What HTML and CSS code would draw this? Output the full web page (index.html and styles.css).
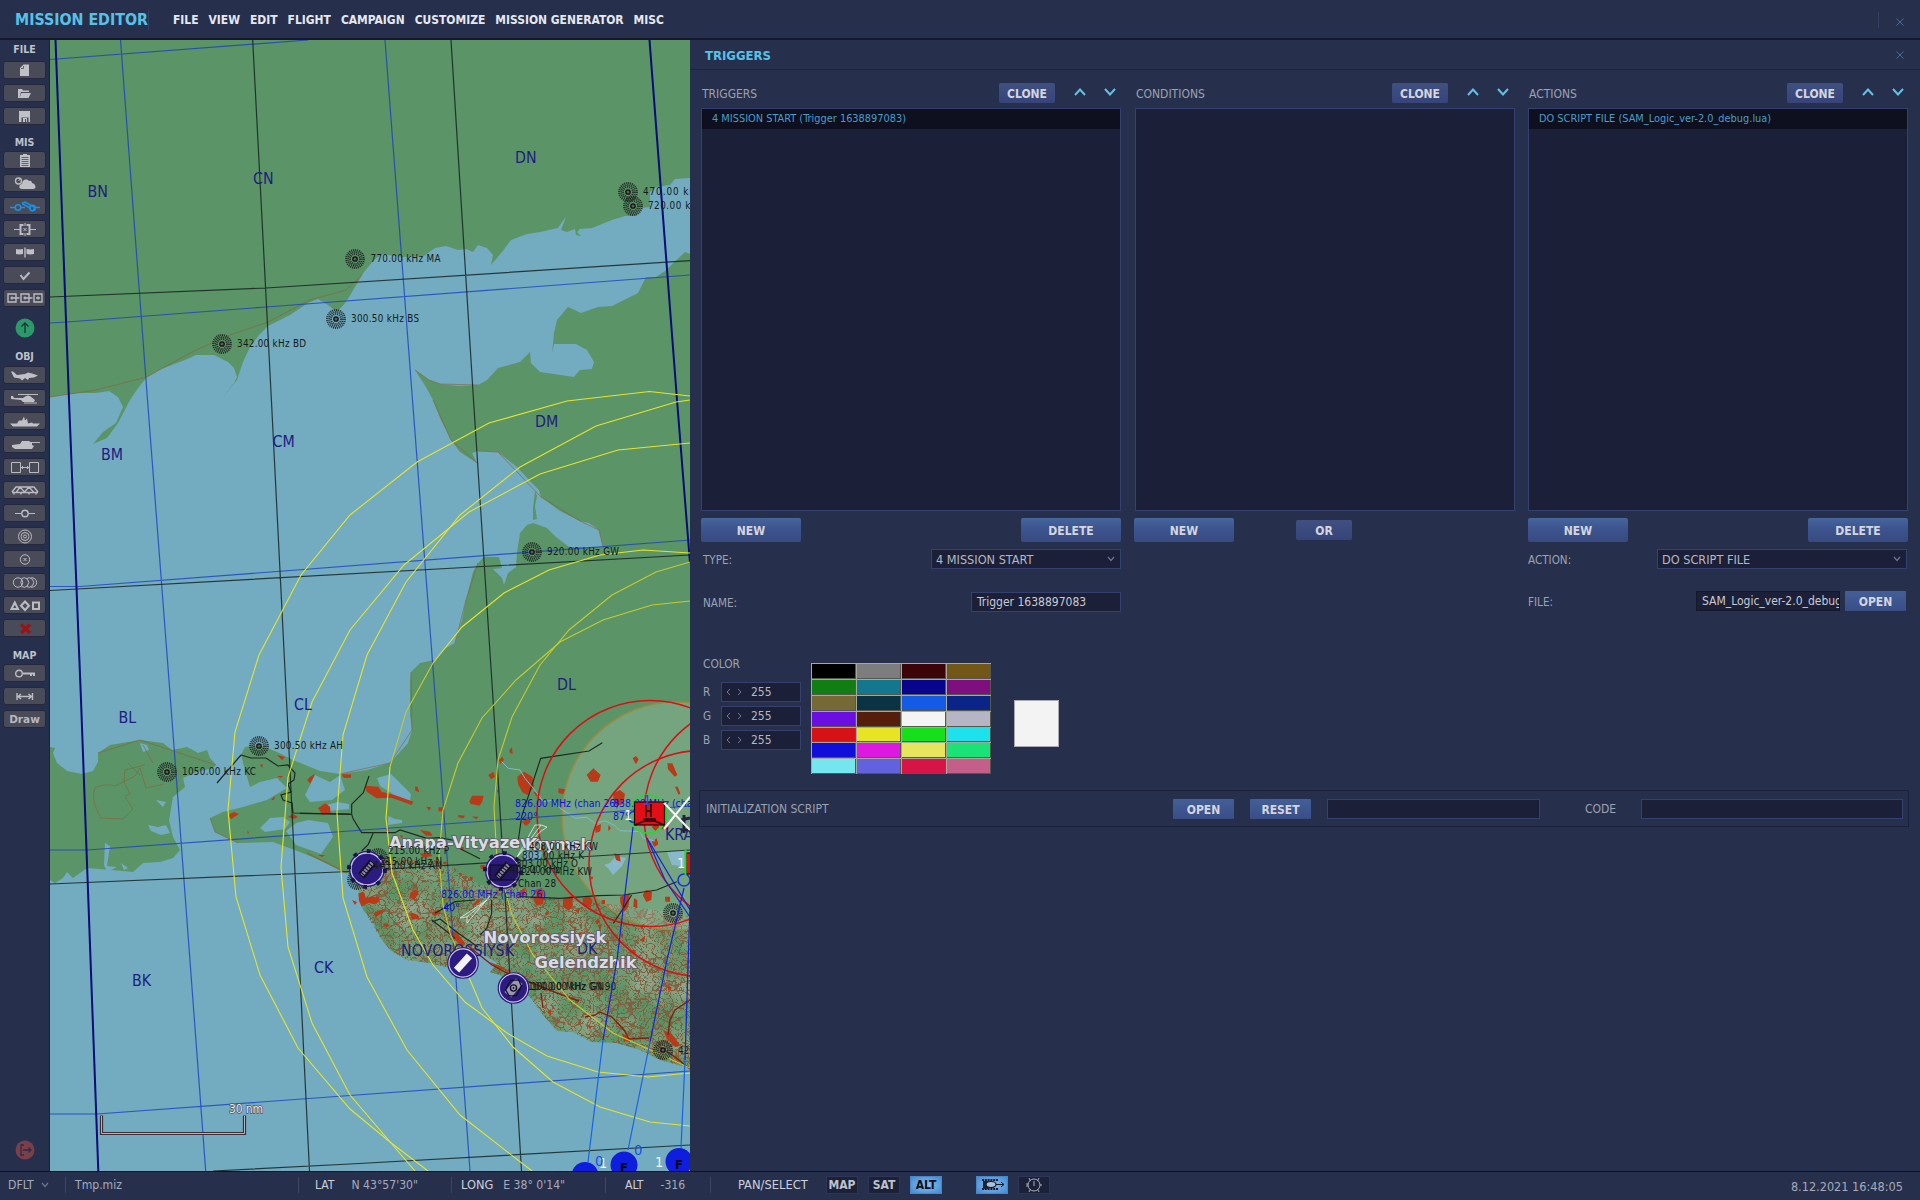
FILE: index.html
```html
<!DOCTYPE html>
<html lang="en">
<head>
<meta charset="utf-8">
<title>Mission Editor</title>
<link rel="stylesheet" href="styles.css">
</head>
<body>
<header class="topbar">
  <h1 class="app-title">MISSION EDITOR</h1>
  <nav class="menu"><span>FILE</span><span>VIEW</span><span>EDIT</span><span>FLIGHT</span><span>CAMPAIGN</span><span>CUSTOMIZE</span><span>MISSION GENERATOR</span><span>MISC</span></nav>
  <svg class="close close-app" viewBox="0 0 8 8"><path d="M0.5 0.5 7.5 7.5M7.5 0.5 0.5 7.5"/></svg>
</header>
<main class="workspace">
  <aside class="sidebar">
    <div class="group-label first">FILE</div>
    <div class="tools">
      <button class="tool"><svg viewBox="0 0 42 17"><path class="f" d="M19.500 2.500H25V14H16V6L19.500 2.500Z"/><path class="d" d="M17 6.500h2.500V4"/></svg></button>
      <button class="tool"><svg viewBox="0 0 42 17"><path class="f" d="M14 13V4h4l1 1.500h6V7h-8l-1.500 5.500L17.500 8H27l-2.500 5Z"/></svg></button>
      <button class="tool"><svg viewBox="0 0 42 17"><path class="f" fill-rule="evenodd" d="M15 3h11v11h-1.500V9.500h-7V14H15ZM19 10h4v4h-1v-3h-1v3h-2Z"/></svg></button>
    </div>
    <div class="group-label">MIS</div>
    <div class="tools">
      <button class="tool"><svg viewBox="0 0 42 17"><path class="f" d="M16 3h3V2h4v1h3v12H16Z"/><path class="d" d="M17.500 5.500h7M17.500 7.500h7M17.500 9.500h7M17.500 11.500h7M17.500 13.500h7"/></svg></button>
      <button class="tool"><svg viewBox="0 0 42 17"><circle class="s b" cx="14.500" cy="6" r="3"/><path class="s" d="M14.500 6l2-2.500"/><path class="f" d="M18 14c-4 0-3-5 0-5 0-4 4-6 7-3 2-1 3 1 3 2 4 1 5 6 1 6Z"/></svg></button>
      <button class="tool active"><svg viewBox="0 0 42 17"><path d="M6 9.500h5M17 9.500h4M31 9.500h5M18 5.500l3-1.500 10 5.500-1.500 2.500"/><path d="M18 5.500l9 5"/><circle cx="14" cy="9.500" r="2.800"/><circle cx="28.500" cy="10" r="2.800"/></svg></button>
      <button class="tool"><svg viewBox="0 0 42 17"><path class="s" d="M10 8.500h6M26 8.500h6M21 2v3M21 12v3M19.500 7l3 3M22.500 7l-3 3"/><path class="s bb" d="M19.500 4h-3v9h3M22.500 4h3v9h-3"/></svg></button>
      <button class="tool"><svg viewBox="0 0 42 17"><path class="f" d="M12 5l3 .5 4-.5v5l-4 .5-3-.5ZM22.500 5l4 .5 3.500-.5v5l-3.500.5-4-.5Z"/><path class="s b" d="M21 3.500v10"/></svg></button>
      <button class="tool"><svg viewBox="0 0 42 17"><path class="s bb" d="M16.500 8l3 4 6-6.500"/></svg></button>
      <button class="tool"><svg viewBox="0 0 42 17"><path class="s b" d="M4 4h8v8H4ZM17 4h8v8h-8ZM30 4h8v8h-8ZM6.500 8h9M19.500 8h9M32 8h4M8 6.500v3M21 6.500v3M34 6.500v3"/></svg></button>
    </div>
    <svg class="upload" viewBox="0 0 20 20"><circle cx="10" cy="10" r="9.500"/><path d="M10 15V5M6.500 8.500 10 5l3.500 3.500"/></svg>
    <div class="group-label obj">OBJ</div>
    <div class="tools">
      <button class="tool"><svg viewBox="0 0 42 17"><path class="f" d="M7 4.500l2 0 4 3.500 8-1 3-1.500 4 1 6 2-4 2-5 .5-1 2-3-2-3 2.500-2-2-6-1Z"/></svg></button>
      <button class="tool"><svg viewBox="0 0 42 17"><path class="f" d="M7 6l2 0 1 2 9 0 3-2h4l5 4-1 2-11 0-2-2-10-1Z"/><path class="s" d="M14 4.500h20M24 4v3M20 13h13"/></svg></button>
      <button class="tool"><svg viewBox="0 0 42 17"><path class="f" d="M6 10.500h7l2-3 3 0 2-4 1 4 2-2 1 5 4-1 1 1h7l-3 3H9Z"/></svg></button>
      <button class="tool"><svg viewBox="0 0 42 17"><path class="f" d="M8 9l8-1 2-3h7l3 2v2l2 1-2 3H11l-3-2Z"/><path class="s" d="M26 6.500h10"/></svg></button>
      <button class="tool"><svg viewBox="0 0 42 17"><path class="s" d="M7.500 3.500h9v10h-9ZM25.500 3.500h9v10h-9ZM16.500 8.500h9M18.500 7v3M23.500 7v3"/></svg></button>
      <button class="tool"><svg viewBox="0 0 42 17"><path class="s b" d="M8 10.500h26M8 10l4-5h18l4 5M12.500 10l3.500-5 4.500 5 4.500-5 4.500 5M10 11v1.500M17 11v1.500M25 11v1.500M32 11v1.500"/></svg></button>
      <button class="tool"><svg viewBox="0 0 42 17"><path class="s" d="M11 8.500h6.500M24.500 8.500H31"/><circle class="s b" cx="21" cy="8.500" r="3.200"/></svg></button>
      <button class="tool"><svg viewBox="0 0 42 17"><circle class="s" cx="21" cy="8.500" r="6.500"/><circle class="s" cx="21" cy="8.500" r="4"/><circle class="s" cx="21" cy="8.500" r="1.500"/></svg></button>
      <button class="tool"><svg viewBox="0 0 42 17"><circle class="s" cx="21" cy="8.500" r="4.700"/><path class="s" d="M19.500 7l3 3M22.500 7l-3 3"/></svg></button>
      <button class="tool"><svg viewBox="0 0 42 17"><circle class="s" cx="14" cy="8.500" r="4.700"/><path class="s" d="M17.500 4.500a4.700 4.700 0 1 1 0 8M22.500 4.500a4.700 4.700 0 1 1 0 8M18 5.500a4.700 4.700 0 0 0 0 6"/><path class="s" d="M27 3.900a4.700 4.700 0 1 1 0 9.200"/></svg></button>
      <button class="tool"><svg viewBox="0 0 42 17"><path class="s bb" d="M7.500 12l3.300-6.500L14 12ZM21 4.500 25 8.800 21 13 17 8.800ZM29 5.500h6v6.500h-6Z"/></svg></button>
      <button class="tool"><svg viewBox="0 0 42 17"><path class="x" d="M17 4.500l9 8.500M26 4.500l-9 8.500"/></svg></button>
    </div>
    <div class="group-label">MAP</div>
    <div class="tools">
      <button class="tool"><svg viewBox="0 0 42 17"><circle class="s b" cx="15" cy="8.500" r="3.300"/><path class="s bb" d="M18.500 8.500H31M27 9v2M30 9v2"/></svg></button>
      <button class="tool"><svg viewBox="0 0 42 17"><path class="s b" d="M13 5v7M28.500 5v7M14 8.500h13.500M17 6l-3 2.500 3 2.500M24.500 6l3 2.500-3 2.500"/></svg></button>
      <button class="tool draw">Draw</button>
    </div>
    <svg class="exit" viewBox="0 0 20 20"><circle cx="10" cy="10" r="9.500"/><path d="M9 5H6v10h3M8 10h8M13.500 7.500 16 10l-2.500 2.500"/></svg>
  </aside>

  <section class="map">
    <svg class="map-canvas" viewBox="50 40 640 1131">
      <defs>
        <g id="ndb"><circle r="9" class="ring"/><circle r="7" class="ring"/><circle r="5" class="ring"/><circle r="2.200" class="core"/></g>
        <g id="airfield"><circle r="18" fill="#2a1c78"/><circle r="16" fill="#2c1c82" stroke="#cfc4ee" stroke-width="1.300"/></g>
        <filter id="contours" x="0" y="0" width="100%" height="100%" color-interpolation-filters="sRGB"><feTurbulence type="turbulence" baseFrequency="0.11" numOctaves="1" seed="8"/><feColorMatrix values="0 0 0 0 .52  0 0 0 0 .36  0 0 0 0 .24  -16 0 0 0 1.100"/></filter>
        <filter id="contours-fine" x="0" y="0" width="100%" height="100%" color-interpolation-filters="sRGB"><feTurbulence type="turbulence" baseFrequency="0.17" numOctaves="1" seed="21"/><feColorMatrix values="0 0 0 0 .5  0 0 0 0 .38  0 0 0 0 .24  -14 0 0 0 .9"/></filter>
        <filter id="relief" x="0" y="0" width="100%" height="100%" color-interpolation-filters="sRGB"><feTurbulence type="fractalNoise" baseFrequency="0.03" numOctaves="4" seed="4"/><feColorMatrix values="0 0 0 0 .62  0 0 0 0 .67  0 0 0 0 .58  1.800 0 0 0 -.68"/></filter>
        <clipPath id="hills"><path d="M352 868L400 858 450 865 480 885 520 888 560 900 620 905 690 915V1068L660 1060 640 1050 617 1043 592 1042 573 1032 557 1031 543 1015 530 997 513 985 500 975 490 972 497 963 477 950 465 960 450 968 430 963 407 960 390 950 380 937 368 917Z"/></clipPath>
      </defs>
      <rect class="sea" x="50" y="40" width="640" height="1131"/>

      <path class="land" d="M50 40H690V178L675 179 670 185 656 187 650 192 650 207 641 208 636 216 625 216 612 220 592 228 580 229 577 232 581 236 576 235 575 229 567 232 561 230 566 217 562 222 558 228 540 232 527 234 511 240 502 252 491 265 493 255 487 248 478 245 473 252 466 249 458 250 446 246 435 248 424 256 402 257 382 254 374 260 364 272 355 287 346 302 337 312 328 305 318 299 308 303 290 315 268 326 259 335 250 347 243 362 237 380 223 397 234 383 237 377 234 368 228 362 214 355 196 355 185 360 161 369 147 377 138 388 130 400 118 423 107 438 93 444 103 432 116 423 123 407 118 397 109 391 96 393 78 393 50 397Z"/>
      <path class="land" d="M690 254L685 252 665 271 656 277 646 277 638 293 612 306 598 307 581 313 568 307 557 320 554 333 552 353 554 344 576 344 587 350 594 362 592 369 580 370 574 377 540 372 531 363 530 352 520 362 498 368 487 380 478 385 458 386 440 384 429 380 415 370 426 387 433 400 440 418 451 440 460 452 477 463 472 453 478 451 498 452 518 468 529 480 539 490 541 497 560 511 580 521 589 523 599 530 603 547 569 547 556 537 547 528 533 523 527 525 520 533 517 553 516 567 508 573 504 585 502 578 493 569 502 568 499 557 484 557 478 563 473 572 466 600 462 620 455 643 446 648 435 660 420 663 411 672 410 683 410 715 412 730 408 743 390 763 367 770 340 774 320 771 293 760 277 752 260 745 245 747 241 755 245 770 250 787 260 782 277 778 287 788 267 800 243 807 223 812 210 818 215 832 238 843 273 842 300 852 320 860 347 872 360 893 363 910 372 920 380 937 390 950 407 960 430 963 450 968 465 960 477 950 497 963 490 972 500 975 513 985 530 997 543 1015 557 1031 573 1032 592 1042 617 1043 640 1050 660 1060 690 1068Z"/>
      <path class="land" d="M50 747L55 748 53 753 57 763 67 771 82 774 93 771 98 762 98 753 110 745 140 740 163 743 172 750 187 747 198 753 207 750 210 758 216 765 213 768 197 772 183 778 185 787 173 797 169 820 173 837 180 850 173 858 160 862 143 863 133 872 123 871 87 868 73 878 67 872 63 878 55 883 50 880Z"/>
      <path class="land" d="M535 491l2 5-2 10 2 13-4 1 0-12Z"/>

      <!-- lagoons and salt lakes -->
      <path class="water" d="M305 795L315 775 330 782 340 775 345 790 332 800 310 802ZM326 805l12-3 11 2v5l-20 2ZM377 778l14-4 20 20-1 7-14-5-16-10ZM388 816l7 3 7 1v3l-14 2ZM296 823l12-3 20 3 5 14-12 17-25-9-10-14ZM260 828l10-10 13-1 7 5-5 7-20 3ZM140 743l7 2 2 5-6 2ZM156 800l10 2-3 5ZM148 825l10 2 8-2 4 8-9 2-10-4ZM105 843l5 3-3 20 10 1-10 5-3-7ZM121 863l7 5-4 2ZM604 865l6-2 6-7 10 2-4 8-9 9-5-7ZM667 852l14-2 9 3v14l-18-2ZM522 852l20 0-2 9-16 0Z"/>
      <path class="shore" d="M50 397L96 390 147 377 161 369 196 350 230 335 268 322 310 300 346 290 362 275M415 370l14 10 11 4 38 1M433 400l18 40 26 23M478 451l20 1 43 45 39 24 19 9 4 17M478 563l-12 37-11 43M411 672l1 58-22 33-50 11M98 753l42-13 76 25M210 818l5 14 23 11"/>
      <path class="trail" d="M143 745l10 18M128 763l12 12M145 765l-20 5-1 12 6 12-5 2M95 788q10-5 20-2l20-10 5-8 6 20 18-4M95 788q-5 12 6 30l22 1 10-10-8-12"/>

      <g clip-path="url(#hills)">
        <rect x="345" y="850" width="350" height="220" filter="url(#relief)"/>
        <rect x="345" y="850" width="350" height="220" filter="url(#contours)"/>
        <rect x="345" y="850" width="350" height="220" filter="url(#contours-fine)"/>
      </g>

      <circle class="zone" cx="676" cy="816" r="114"/>

      <!-- towns -->
      <path class="town" transform="translate(300 680) scale(.33333)" d="M195 317l40 3 10 15 45 12 50 18-5 10-60-22-45 2-30-20ZM55 385l20-15 15 10 2 20-25 5ZM25 295l20-12-15 28ZM128 285l25-2 0 10-22 0ZM508 365l8-18 35 0-5 20-8 10-25-5ZM652 290l20-15 25 15 5 30-20 25-15-8-13-25ZM565 285l15-10 5 15-12 8ZM597 240l10-10 5 10-12 12ZM628 210l8-8 2 20-8-3ZM775 325l20 3-5 15-15-5ZM860 285l20-20 22 20-8 20-22 0ZM998 235l10-7 8 10-8 15ZM1102 250l15 0 15 35-8 5-20-22ZM940 340l20-10 15 12-5 30-22 5-8-20ZM1125 320l8 0 8 20-5 5ZM665 425l20-10 8 10-15 13ZM345 320l8 0 5 17-12-5ZM360 450l30 5 8 12-20 0ZM378 380l15 2-5 10ZM415 382l15 0 0 12-14 0ZM475 405l20 2-5 8-15-3ZM515 410l20 0-5 8ZM885 440l18-8-2 22-14 5ZM925 435l8 10-8 8ZM1055 440l15-12 8 12-12 14ZM1085 437l22 3-2 8-20 0ZM942 520l17 5 3 20-14-5ZM1055 485l15-10 5 18-12 8ZM175 640l15-5 8 20 20-8 20 18-15 8-20-5-18 12-8-18ZM215 650l20 0 5 12-18 5ZM330 640l18-12 8 12-14 20-12-8ZM328 700l20 5 10 10-22 5ZM220 700l20-10 15 2-28 20ZM250 730l20 5-12 8ZM395 700l20-12 8 12-20 8ZM515 675l20-18 5 8-18 14ZM700 660l10-15 20 5 0 22-20 5ZM790 655l28-8 0 30-12 15-18-12ZM848 655l20-8 10 15-8 20-20-5ZM825 690l15-5-5 18ZM960 650l30-10-5 40-12 15-12-25ZM1028 645l10-15 18 5-2 25-15 6ZM1002 655l10 5 0 25-12-5ZM1095 650l15 0 0 15-14 0ZM905 660l10 0 0 12-10 0ZM475 580l8-2-2 12ZM510 590l8 0 0 10-8 0ZM735 700l10-8 2 10-10 5ZM885 725l10-10 5 10-10 8ZM820 740l10 0-5 20ZM1020 740l14-10-8 20ZM740 760l8-5 0 12ZM830 760l20-5-10 10ZM360 520l30 0 8 8-30 5ZM400 540l12 2-5 10ZM430 545l10 0 0 8-10 0ZM480 500l12 2-3 12ZM540 555l15 0 0 12-12 0ZM560 490l12-5 2 12ZM255 445l12 4-4 8ZM300 465l10 3-6 6ZM700 335l14 4-4 12ZM590 330l8 2-3 8ZM760 560l10 2-6 10ZM800 520l8 2-4 8ZM870 590l10 0-4 10Z"/>
      <path class="town" d="M228 815l6-3 5 2-8 5ZM288 817l5-3 5 3-4 2ZM277 755l8 2-3 3ZM260 765l3-1-1 4ZM277 776l6 0-2 2ZM271 800l4-4-1 4ZM307 780l7-6-4 9ZM318 808l9-4 3 6-5 4ZM342 774l8 1-1 3-6-1ZM318 855l7 0-3 2ZM247 831l2 1-1 2ZM352 900l5 2-2 3ZM447 930l10 3 8 10-2 4-9-8ZM490 962l16 7 4 3-15-5ZM547 1012l4-3 0 7ZM622 1033l6 4 2 5-6-1ZM588 1025l4 1-2 4ZM650 1032l3-3 0 5ZM663 1030l8 3 9 12-5 2-8-8ZM518 893l8-6-2 9ZM535 890l7-2 2 7-6 3ZM668 985l4 3-4 3ZM410 912l8 3 2 5-8-2ZM620 935l3-2 0 6ZM632 950l4 0-2 6ZM575 1000l4-1-2 5ZM620 1018l4 1-2 3ZM606 1012l3-2 1 4ZM640 940l5-4-1 6ZM598 925l4-1-2 6Z"/>

      <!-- roads -->
      <g transform="translate(300 680) scale(.33333)">
        <path class="road" d="M0 400l155 3 0-30 35-35 17-50M155 403l5 15 25 40 35 0-15 35-20 20M185 458l100 0 15-8 80 25 40-2 50 10 0 18 70 35M655 480l10-70 57-175 145-22 40-25M660 650l120 5 115-8 75-2 100-15 60-25M995 645l-25 40-30 45M575 660l0 40-15 45-20 20M405 700l60-35 60-5M395 720l40 30 30 25"/>
        <path class="river" d="M605 245l20 20 35 5 15 25 25 30 15 20 15 20 30-5 20 25 25 15 20 15 35-3 25 18 30-8 30 15 15 15 60 3 10 20 35 8"/>
      </g>
      <path class="road" d="M241 755l-24 28M241 755l10 3 15 0 12 8 10-1 7 8-1 7-6 4 3 8-10 3 2 5 9 3 1 10M293 813l57 1"/>
      <path class="road spit" d="M307 853l40 20"/>
      <path class="road" d="M432 922l8-3 18 14 20 14"/>
      <path class="road red" d="M467 945l25 20 15 8 50 20 22 8M585 1017l10-2 5-3 12 5 12 13 5 9 20-1M668 1035l2-15 5-10 15-10M543 1008l-2-15M660 1047l15 10 15 12"/>

      <!-- coordinate grid -->
      <g class="grid blue">
        <path d="M50 59.500L308 40M50 323L67 322 266 307 690 275M50 586.500H80L690 540M50 850H87L350 831 690 806M50 1114H97L350 1095.500 690 1071M120.500 40L147.500 400 170.500 700 205.700 1171M385 40L412.500 400 440 760 470 1171"/>
      </g>
      <g class="grid dark">
        <path d="M50 297L266 288 690 260.700M50 590.500L690 555M50 884L350 871.500 690 850M213 1171L350 1164 690 1145M252.700 40L271.400 400 289.500 760 309.500 1171M451 40L473.500 400 497 760 521.500 1171"/>
      </g>
      <path class="grid navy" d="M55.500 40L69 400 81 700 98.300 1171M649.500 40L677 400 690 563"/>

      <!-- threat rings -->
      <g class="range yellow">
        <path d="M690 396L649.500 391.500 567 401 489 423 417 462 350 515 301 575 259 655 235 732 228 810 236 897 260 975 298 1048 350 1109 390 1142 428 1171"/>
        <path d="M690 400L676 402 596 426 520 467 460 515 406 582 367 655 343 735 337 813 343 898 367 977 407 1050 460 1115 532 1171"/>
        <path d="M690 443L618 450 540 474 469 512 404 565 350 630 312 702 288 777 281 867 288 947 312 1023 350 1095 415 1171"/>
        <path d="M690 553L643 550 600 555 549 570 504 593 462 627 433 663"/>
        <path d="M390 767L386 818 392 873 413 930 433 965 465 1002 507 1033 547 1056 598 1072 648 1077 690 1073"/>
        <path class="over-land" d="M433 663L406 712 390 767"/>
        <path class="over-land" d="M690 562L656 572 612 595 569 630 540 665 512 717 498 760 494 807 497 860 512 915 533 955 570 1000 613 1033 690 1068"/>
        <path class="over-land" d="M690 601L652 605 603 620 560 642 516 680 482 718 458 763 443 810 439 857 443 905 450 933 465 968"/>
        <path d="M465 968L482 1008 513 1047 553 1082 600 1107 650 1122 690 1126"/>
      </g>
      <g class="range red"><circle cx="650" cy="813.500" r="113"/><circle cx="702" cy="863.500" r="113"/><circle cx="757" cy="815" r="113"/></g>

      <!-- runway beams -->
      <path class="beam" d="M517 857L535 825 541 825 547 827 540 832ZM517 857L541 825M487 900L460 918 467 917 467 923 490 896M487 900L467 917"/>

      <!-- square names -->
      <g class="square">
        <text x="87.500" y="197">BN</text><text x="253" y="184">CN</text><text x="515" y="163">DN</text><text x="101" y="460">BM</text><text x="272.500" y="447">CM</text><text x="535" y="427">DM</text><text x="118.500" y="723">BL</text><text x="294" y="710">CL</text><text x="557" y="690">DL</text><text x="132" y="985.500">BK</text><text x="314" y="973">CK</text><text x="577" y="954">DK</text>
        <text x="401" y="956" textLength="113">NOVOROSSIYSK</text><text x="665" y="840">KRAS</text>
      </g>

      <!-- airfields -->
      <use href="#ndb" x="378" y="858"/><use href="#ndb" x="357" y="880"/>
      <g transform="translate(367 869)"><use href="#airfield"/><circle r="18" class="af-dots"/><g transform="rotate(40)"><rect x="-4" y="-9" width="8" height="18" fill="#151020"/><path d="M0-8V8" class="rw"/></g></g>
      <g transform="translate(503 871)"><use href="#airfield"/><circle r="18" class="af-dots"/><rect x="-13" y="-6" width="28" height="15" fill="#100c20" fill-opacity=".35" stroke="#0d0a18"/><g transform="rotate(40)"><rect x="-4" y="-9" width="8" height="18" fill="#151020"/><path d="M0-8V8" class="rw"/></g></g>
      <g transform="translate(463 963) scale(.88)"><use href="#airfield"/><rect x="-4" y="-11" width="8" height="22" fill="#f4f3fa" transform="rotate(42)"/></g>
      <g transform="translate(513.500 988) scale(.88)"><use href="#airfield"/><rect x="-5" y="-10" width="10" height="20" fill="#9a96b4" transform="rotate(40)"/><path d="M-9 2L-3-9H6L9-2 3 9H-5Z" class="hex"/><circle r="3.500" class="hex"/><circle r="1" fill="#111"/></g>

      <g class="city">
        <text x="389" y="848" textLength="153" lengthAdjust="spacingAndGlyphs">Anapa-Vityazevo</text><text x="525" y="850" textLength="66" lengthAdjust="spacingAndGlyphs">Krymsk</text>
        <text x="483.500" y="942.500" textLength="123" lengthAdjust="spacingAndGlyphs">Novorossiysk</text><text x="534.500" y="968" textLength="102" lengthAdjust="spacingAndGlyphs">Gelendzhik</text>
      </g>

      <!-- radio beacons -->
      <use href="#ndb" x="628" y="192"/><use href="#ndb" x="633" y="206"/><use href="#ndb" x="355" y="259"/><use href="#ndb" x="336" y="319"/><use href="#ndb" x="222" y="344"/><use href="#ndb" x="532" y="552"/><use href="#ndb" x="259" y="746"/><use href="#ndb" x="167" y="772"/><use href="#ndb" x="673" y="913"/><use href="#ndb" x="663" y="1050"/>
      <g class="beacon">
        <text x="643" y="195" textLength="76">470.00 kHz KR</text><text x="648" y="209" textLength="72">720.00 kHz NN</text>
        <text x="370.500" y="262" textLength="70">770.00 kHz MA</text><text x="351" y="322" textLength="68">300.50 kHz BS</text>
        <text x="237" y="347" textLength="69">342.00 kHz BD</text><text x="547" y="555" textLength="72">920.00 kHz GW</text>
        <text x="274" y="748.500" textLength="69">300.50 kHz AH</text><text x="182" y="775" textLength="74">1050.00 kHz KC</text>
        <text x="678" y="1053.500">420</text>
        <text x="388" y="853.500" textLength="61">215.00 kHz P</text><text x="380" y="865" textLength="62">215.00 kHz N</text><text x="373" y="869" textLength="69">443.00 kHz AN</text>
        <text x="529" y="850" textLength="69">408.00 kHz KW</text><text x="522" y="858.500" textLength="62">803.00 kHz K</text><text x="516" y="867" textLength="62">803.00 kHz O</text><text x="510" y="873">408.00 kHz</text><text x="519" y="874.500" textLength="73">124.00 MHz KW</text><text x="518" y="887" textLength="38">Chan 28</text>
        <text x="528" y="990" textLength="76">100.00 MHz GN</text><text x="531" y="990" textLength="85">1000.00 kHz GN 90</text>
      </g>

      <!-- flight routes -->
      <path class="route" d="M633 827L617 960 603 1040M647 838L690 910M647 838L665 880 690 917M684 888L667 960 650 1042M690 905L685 1060"/>
      <path class="route sea-leg" d="M603 1040L588 1162M650 1042L628 1150M685 1060L681 1148"/>
      <g class="channel"><text x="515" y="807" textLength="104">826.00 MHz (chan 26)</text><text x="515" y="820">220°</text><text x="613" y="807" textLength="104">838.00 MHz (chan 38)</text><text x="613" y="820">87°</text><text x="441" y="898" textLength="105">826.00 MHz (chan 26)</text><text x="443" y="911">40°</text></g>

      <!-- units -->
      <circle cx="648" cy="814" r="19" class="sel"/><circle cx="634" cy="817" r="5.500" class="wp"/><circle cx="684" cy="880" r="6" class="wp"/>
      <rect x="634.500" y="802" width="30" height="23" class="unit"/><path d="M635 825l9-4h11l9 4M644 821v-2h11v2M646 817V804M651 817V804M646 811h5" class="unit-mark"/>
      <rect x="686" y="853" width="8" height="21" class="unit"/><path d="M685.500 850v26" stroke="#22d92c" stroke-width="2"/>
      <path d="M681 820l9-2M681 830h9M684 815v18" stroke="#222040" stroke-width="3"/>
      <path d="M664 803l26 27M690 797l-26 32" class="cross"/>
      <g class="num"><text x="624" y="820">1</text><text x="677" y="868">1</text><text x="599" y="1168">1</text><text x="655" y="1167">1</text></g>
      <g class="num azure"><text x="643" y="805">1</text><text x="595" y="1166">0</text><text x="634" y="1155">0</text></g>
      <circle cx="585" cy="1175.500" r="13.500" class="friend"/><circle cx="624" cy="1165" r="13.500" class="friend"/><circle cx="679" cy="1161.500" r="13.500" class="friend"/>
      <g class="num black"><text x="620" y="1172">F</text><text x="675" y="1169">F</text></g>

      <!-- scale bar -->
      <path class="scale-edge" d="M101.500 1115.500V1133.500H244.500V1115.500"/><path class="scale-bar" d="M101.500 1116V1133.500H244.500V1116"/>
      <text class="scale-text" x="229" y="1112.500" textLength="34">30 nm</text>
    </svg>
  </section>

  <section class="panel">
    <div class="panel-head"><h2>TRIGGERS</h2><svg class="close" viewBox="0 0 8 8"><path d="M0.5 0.5 7.5 7.5M7.5 0.5 0.5 7.5"/></svg></div>
    <div class="columns">
      <div class="col col-triggers">
        <div class="col-head"><span class="lbl">TRIGGERS</span><button class="btn small">CLONE</button><svg class="arrow" viewBox="0 0 12 8"><path d="M1 7 6 1.500 11 7"/></svg><svg class="arrow" viewBox="0 0 12 8"><path d="M1 1 6 6.500 11 1"/></svg></div>
        <div class="list"><div class="item">4 MISSION START (Trigger 1638897083)</div></div>
        <div class="actions"><button class="btn">NEW</button><button class="btn">DELETE</button></div>
        <div class="field"><span class="lbl">TYPE:</span><div class="combo type">4 MISSION START<svg viewBox="0 0 8 6"><path d="M1 1 4 4.500 7 1"/></svg></div></div>
        <div class="field name"><span class="lbl">NAME:</span><div class="input">Trigger 1638897083</div></div>
        <div class="color-title lbl">COLOR</div>
        <div class="color">
          <div class="rgb">
            <div class="chan"><span class="lbl">R</span><div class="spin"><svg viewBox="0 0 17 8"><path d="M4 1 1 4l3 3M12 1l3 3-3 3"/></svg>255</div></div>
            <div class="chan"><span class="lbl">G</span><div class="spin"><svg viewBox="0 0 17 8"><path d="M4 1 1 4l3 3M12 1l3 3-3 3"/></svg>255</div></div>
            <div class="chan"><span class="lbl">B</span><div class="spin"><svg viewBox="0 0 17 8"><path d="M4 1 1 4l3 3M12 1l3 3-3 3"/></svg>255</div></div>
          </div>
          <div class="palette">
            <i style="background:#000"></i><i style="background:#7d7d80"></i><i style="background:#3b0406"></i><i style="background:#735716"></i>
            <i style="background:#127d13"></i><i style="background:#13778e"></i><i style="background:#08058d"></i><i style="background:#7d0f7e"></i>
            <i style="background:#756a35"></i><i style="background:#0a3444"></i><i style="background:#135be4"></i><i style="background:#0b2487"></i>
            <i style="background:#6b0fe0"></i><i style="background:#551e0c"></i><i style="background:#f4f4f4"></i><i style="background:#b6b5c5"></i>
            <i style="background:#d51316"></i><i style="background:#e7e423"></i><i style="background:#17df1c"></i><i style="background:#1de2ec"></i>
            <i style="background:#110ed9"></i><i style="background:#dd18e1"></i><i style="background:#e7e55e"></i><i style="background:#19e277"></i>
            <i style="background:#75e5ee"></i><i style="background:#6362de"></i><i style="background:#d71446"></i><i style="background:#c45f89"></i>
          </div>
          <div class="swatch"></div>
        </div>
      </div>
      <div class="col col-conditions">
        <div class="col-head"><span class="lbl">CONDITIONS</span><button class="btn small">CLONE</button><svg class="arrow" viewBox="0 0 12 8"><path d="M1 7 6 1.500 11 7"/></svg><svg class="arrow" viewBox="0 0 12 8"><path d="M1 1 6 6.500 11 1"/></svg></div>
        <div class="list"></div>
        <div class="actions or"><button class="btn">NEW</button><button class="btn small">OR</button></div>
      </div>
      <div class="col col-actions">
        <div class="col-head"><span class="lbl">ACTIONS</span><button class="btn small">CLONE</button><svg class="arrow" viewBox="0 0 12 8"><path d="M1 7 6 1.500 11 7"/></svg><svg class="arrow" viewBox="0 0 12 8"><path d="M1 1 6 6.500 11 1"/></svg></div>
        <div class="list"><div class="item">DO SCRIPT FILE (SAM_Logic_ver-2.0_debug.lua)</div></div>
        <div class="actions"><button class="btn">NEW</button><button class="btn">DELETE</button></div>
        <div class="field"><span class="lbl">ACTION:</span><div class="combo action">DO SCRIPT FILE<svg viewBox="0 0 8 6"><path d="M1 1 4 4.500 7 1"/></svg></div></div>
        <div class="field file"><span class="lbl">FILE:</span><div class="input path">SAM_Logic_ver-2.0_debug.lua</div><button class="btn open">OPEN</button></div>
      </div>
    </div>
    <div class="init"><span class="lbl">INITIALIZATION SCRIPT</span><button class="btn open">OPEN</button><button class="btn open">RESET</button><div class="input script"></div><span class="lbl code">CODE</span><div class="input code-input"></div></div>
  </section>
</main>
<footer class="status">
  <div class="cell c-profile">DFLT<svg class="chev" viewBox="0 0 8 6"><path d="M1 1 4 4.500 7 1"/></svg></div>
  <div class="cell c-file">Tmp.miz</div>
  <div class="cell c-lat"><b>LAT</b><span>N 43°57'30"</span></div>
  <div class="cell c-long"><b>LONG</b><span>E 38° 0'14"</span></div>
  <div class="cell c-alt"><b>ALT</b><span>-316</span></div>
  <div class="cell c-mode"><b>PAN/SELECT</b>
    <div class="modes"><button>MAP</button><button>SAT</button><button class="on">ALT</button></div>
    <div class="modes icons">
      <button class="on"><svg viewBox="0 0 32 18"><path d="M6 4h16M6 13h16" class="film"/><path d="M7 5h6l-3 4 3 4H7Z" fill="#1d2438"/><ellipse cx="15" cy="8.500" rx="5" ry="3" fill="#a9c4dc" stroke="#141828" stroke-width="1.200"/><path d="M20 8.500h8M25 6l3 2.500-3 2.500" fill="none" stroke="#141828"/></svg></button>
      <button><svg viewBox="0 0 32 18"><circle cx="16" cy="9" r="6" class="w"/><path class="w" d="M16 5v5M11 2l1.500 3M21 2l-1.500 3M12.500 13 11 16M19.500 13l1.500 3M22 9h2M9 7v4"/></svg></button>
    </div>
  </div>
  <div class="clock">8.12.2021 16:48:05</div>
</footer>
</body>
</html>
```
FILE: styles.css
```css
* { box-sizing: border-box; }
body { margin: 0; width: 1920px; height: 1200px; overflow: hidden; display: flex; flex-direction: column; background: #26304d; color: #a9adb9; font: 12px "DejaVu Sans Condensed", "DejaVu Sans", sans-serif; font-stretch: condensed; }
button { margin: 0; padding: 0; border: 0; font: inherit; color: inherit; display: flex; align-items: center; justify-content: center; }
h1, h2 { margin: 0; }
svg { display: block; }

.topbar { height: 40px; border-bottom: 2px solid #14182a; display: flex; align-items: center; padding: 1px 16px 0 15px; flex: none; }
.app-title { width: 134px; height: 20px; line-height: 20px; font-size: 15.800px; color: #58c1e6; border-right: 1px solid #343f62; white-space: nowrap; }
.menu { display: flex; gap: 10px; margin-left: 24px; color: #e6e8f0; font-weight: bold; font-size: 11.950px; white-space: nowrap; }
.close { width: 8px; height: 8px; fill: none; stroke: #52658f; margin-left: auto; }
.close-app { box-sizing: content-box; margin-left: auto; padding-left: 17px; border-left: 1px solid #343f62; height: 8px; padding-top: 6px; padding-bottom: 2px; }

.workspace { flex: 1; display: flex; min-height: 0; }
.sidebar { width: 50px; display: flex; flex-direction: column; align-items: center; padding-bottom: 11px; border-right: 1px solid #1b2238; }
.group-label { height: 27px; padding-top: 11px; line-height: 15px; font-size: 10.500px; font-weight: bold; color: #bdc1cc; }
.group-label.first { height: 21px; padding-top: 2px; }
.group-label.obj { height: 28px; padding-top: 11px; }
.tools + .group-label:nth-of-type(n+5) { height: 28px; padding-top: 12px; }
.tools { display: flex; flex-direction: column; gap: 6px; }
.tool { width: 43px; height: 18px; margin-bottom: -1px; background: #4a4b58; border: 1px solid #26273a; border-radius: 3px; }
.tool svg { width: 42px; height: 17px; flex: none; fill: none; }
.tool .f { fill: #c0c1c6; }
.tool .s { stroke: #bbbcc2; stroke-width: 1; }
.tool .b { stroke-width: 1.400; }
.tool .bb { stroke-width: 2; }
.tool .d { stroke: #4a4b58; stroke-width: .8; }
.tool .x { stroke: #9c1215; stroke-width: 3.400; }
.tool.active svg { stroke: #1f8fe0; stroke-width: 1.500; }
.draw { font-weight: bold; font-size: 10.500px; color: #b6b7bf; font-family: "DejaVu Sans", sans-serif; font-stretch: normal; }
.upload, .exit { width: 20px; height: 20px; margin-left: 1px; fill: #2b9968; stroke: #18323a; stroke-width: 1.300; }
.upload { margin-top: 12px; }
.upload circle, .exit circle { stroke: none; }
.exit { margin-top: auto; fill: #793f4b; stroke: #332a42; }
.exit path, .upload path { fill: none; }

.map { width: 640px; overflow: hidden; }
.map-canvas { width: 640px; height: 1131px; }
.map-canvas text { font-family: "DejaVu Sans Condensed", "DejaVu Sans", sans-serif; }
.sea, .water { fill: #73abc0; }
.land { fill: #5b9467; }
.shore, .trail { fill: none; stroke: #86633c; stroke-width: .7; stroke-opacity: .9; }
.zone { fill: #fff; fill-opacity: .16; stroke: #9a8a45; stroke-width: 1.500; }
.town { fill: #b93a18; }
.road { fill: none; stroke: #1d2a20; stroke-width: 1.200; }
g .road { stroke-width: 3.500; }
.road.spit { stroke: #77763f; stroke-width: 1.500; }
.road.red { stroke: #7c2413; stroke-width: 1.400; }
.river { fill: none; stroke: #7dbccb; stroke-width: 3; }
.grid { fill: none; stroke-width: 1.200; }
.grid.blue { stroke: #1c40c0; stroke-opacity: .8; }
.grid.dark { stroke: #121f1e; stroke-opacity: .82; }
.grid.navy { stroke: #060b78; stroke-width: 2; }
.range { fill: none; }
.range.yellow { stroke: #e6e52a; stroke-width: 1.100; }
.over-land { stroke: #c4cc2c; }
.range.red { stroke: #dd0d14; stroke-width: 1.500; }
.beam { fill: none; stroke: #e8eee6; stroke-width: .8; }
.ring { fill: none; stroke: #1c2222; stroke-width: 1.800; stroke-dasharray: 1.200 .8; stroke-opacity: .85; }
.core { fill: #56605e; stroke: #101212; stroke-width: 1.300; }
.beacon { font-size: 9.800px; fill: #121c1a; }
.square { font-size: 15.800px; fill: #201c80; }
.af-dots { fill: none; stroke: #1b1545; stroke-width: 4; stroke-dasharray: 4 10; }
.rw { stroke: #8b86a8; stroke-width: 4; stroke-dasharray: 2 1; }
.hex { fill: none; stroke: #14101e; stroke-width: 1.500; }
.city { font-size: 16px; font-weight: bold; fill: #dddbe2; stroke: #5d5c6b; stroke-width: 1.600; paint-order: stroke; }
.route { fill: none; stroke: #1222dd; stroke-width: 1.200; }
.sea-leg { stroke: #1763e6; }
.channel { font-size: 10.500px; fill: #0d12df; }
.sel { fill: none; stroke: #22d92c; stroke-width: 1.300; }
.wp { fill: none; stroke: #1432e8; stroke-width: 1.600; }
.unit { fill: #e40f16; stroke: #250406; stroke-width: 1.200; }
.unit-mark { fill: none; stroke: #16060a; stroke-width: 1.400; }
.cross { stroke: #f3f5f5; stroke-width: 2; }
.num { font-size: 14.500px; fill: #f3f6fa; }
.num.azure { fill: #1450e0; }
.num.black { fill: #060716; font-weight: bold; font-size: 13px; }
.friend { fill: #0f1ddf; }
.scale-edge { fill: none; stroke: #3b2c36; stroke-width: 3.200; }
.scale-bar { fill: none; stroke: #b3b4bd; stroke-width: 1; }
.scale-text { font-size: 12px; fill: #e5e7ea; stroke: #50535e; stroke-width: 1.300; paint-order: stroke; }

.panel { flex: 1; min-width: 0; }
.panel-head { height: 30px; border-bottom: 1px solid #1c2341; display: flex; align-items: center; padding: 1px 16px 0 15px; }
.panel-head h2 { font-size: 13px; color: #58c1e6; }
.columns { display: flex; padding-left: 11px; height: 720px; }
.col { width: 420px; margin-right: 14px; flex: none; }
.col-conditions, .col-actions { width: 380px; }
.col-conditions { margin-right: 13px; }
.col-head { height: 38px; padding: 13px 5px 5px 1px; display: flex; align-items: center; }
.col-conditions .col-head { padding-right: 6px; }
.col-actions .col-head { padding-right: 4px; }
.lbl { color: #9da2b0; font-size: 11.600px; white-space: nowrap; }
.col-head .lbl { flex: 1; font-size: 12px; padding-top: 1px; }
.arrow { width: 12px; height: 8px; fill: none; stroke: #66c0e2; stroke-width: 2; margin-left: 19px; margin-top: -3px; }
.arrow + .arrow { margin-left: 18px; }
.btn { width: 100px; height: 24px; padding-top: 1px; border-radius: 2px; background: linear-gradient(#46669d, #3d5590 40%, #384a7f); color: #d3d6df; font-weight: bold; font-size: 12px; }
.btn.small { width: 56px; height: 20px; background: linear-gradient(#405081, #36447a); }
.btn.open { width: 61px; height: 20px; border-radius: 1px; background: linear-gradient(#435f98, #3a4d87); }
.list { height: 403px; border: 1px solid #34406e; background: #1b2038; }
.item { height: 20px; line-height: 20px; padding-left: 10px; background: #0e101f; color: #4a9dcb; font-size: 10.900px; white-space: nowrap; }
.actions { display: flex; justify-content: space-between; align-items: center; height: 24px; margin-top: 7px; }
.actions.or { padding-right: 163px; margin-left: -1px; }
.field { display: flex; align-items: center; height: 20px; margin-top: 7px; padding-left: 2px; }
.field .lbl { flex: 1; padding-top: 1px; }
.field.name { margin-top: 23px; }
.field.file { margin-top: 22px; padding-right: 2px; }
.col-actions .field { padding-left: 0; }
.combo, .input, .spin { height: 20px; background: #1b2038; border: 1px solid #34406e; font-size: 12px; line-height: 19px; color: #b5b8c2; white-space: nowrap; overflow: hidden; }
.combo { padding: 0 5px 0 4px; display: flex; align-items: center; justify-content: space-between; font-size: 12.600px; }
.combo svg, .chev { width: 8px; height: 6px; fill: none; stroke: #6d7590; stroke-width: 1.200; }
.type { width: 190px; }
.action { width: 250px; margin-right: 1px; }
.input { width: 150px; padding-left: 5px; color: #c8cbd4; }
.input.path { width: 144px; margin-right: 5px; border-color: #141829; }
.color-title { height: 14px; line-height: 14px; margin: 45px 0 0 2px; font-size: 11.800px; }
.color { display: flex; align-items: flex-start; margin-top: -8px; }
.rgb { display: flex; flex-direction: column; gap: 4px; width: 100px; margin: 19px 10px 0 0; }
.chan { display: flex; align-items: center; justify-content: space-between; padding-left: 2px; }
.spin { width: 80px; display: flex; align-items: center; padding-left: 4px; }
.spin svg { width: 17px; height: 8px; margin-right: 8px; fill: none; stroke: #747a8e; }
.palette { display: grid; grid-template-columns: repeat(4, 45px); grid-auto-rows: 15.900px; }
.palette i { border-top: 1px solid #a5a89b; border-left: 1px solid #a5a89b; box-shadow: inset -1px -1px #55584c; }
.swatch { width: 45px; height: 47px; margin: 37px 0 0 23px; background: #f3f3f3; border: 1px solid #a9aab0; }
.init { width: 1210px; height: 37px; margin-left: 9px; border: 1px solid #1b213a; display: flex; align-items: center; padding: 1px 5px 0 6px; }
.init .lbl:first-child { width: 467px; font-size: 12px; flex: none; }
.init .btn { margin-right: 16px; flex: none; }
.input.script { width: 213px; flex: none; }
.lbl.code { margin-left: 45px; width: 56px; font-size: 12px; flex: none; }
.input.code-input { width: 262px; flex: none; }

.status { height: 29px; flex: none; border-top: 1px solid #10131f; display: flex; align-items: center; padding-bottom: 3px; font-size: 12.100px; color: #a7abb9; white-space: nowrap; }
.cell { display: flex; align-items: center; height: 16px; border-right: 1px solid #3b4460; }
.cell b { font-weight: normal; color: #cdd0da; }
.c-profile { width: 66px; padding-left: 8px; gap: 7px; }
.c-file { width: 233px; padding-left: 9px; }
.c-lat { width: 153px; padding-left: 16px; gap: 17px; }
.c-long { width: 154px; padding-left: 9px; gap: 10px; }
.c-long b { font-size: 12.700px; }
.c-alt { width: 105px; padding-left: 19px; gap: 17px; }
.c-mode { border: 0; padding-left: 27px; flex: 1; }
.c-mode > b { font-size: 12.800px; width: 71px; }
.modes { display: flex; gap: 10px; margin-left: 17px; }
.modes button { width: 32px; height: 18px; background: #1b2139; border: 1px solid #2e3657; font-weight: bold; font-size: 12px; color: #bfc2cc; }
.modes button.on { background: radial-gradient(#8fc0ec, #3f8ad4); border-color: #4a86c4; color: #0e1220; }
.modes.icons { margin-left: 34px; }
.modes svg { width: 32px; height: 18px; flex: none; }
.film { fill: none; stroke: #141828; stroke-width: 2; stroke-dasharray: 2 .8; }
.w { fill: none; stroke: #aeb1ba; }
.clock { padding: 4px 17px 0 0; font-size: 12.600px; }
```
